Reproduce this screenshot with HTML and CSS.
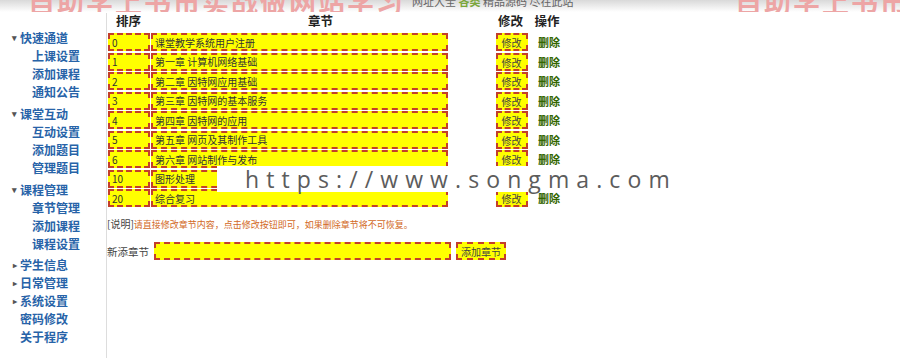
FILE: index.html
```html
<!DOCTYPE html>
<html>
<head>
  <title>章节管理</title>
  <link rel="stylesheet" href="styles.css">
</head>
<body>
<div class="topbar">
  <span class="brand brand-left">自助学上书市实战做网站学习</span>
  <span class="topnote">网址大全 <b>各类</b> 精品源码 尽在此站</span>
  <span class="brand brand-right">自助学上书市</span>
</div>

<div class="layout">
  <div class="side">
    <div class="group">
      <div class="group-title"><span class="arrow">&#9662;</span>快速通道</div>
      <a class="side-link">上课设置</a>
      <a class="side-link">添加课程</a>
      <a class="side-link">通知公告</a>
    </div>
    <div class="group">
      <div class="group-title"><span class="arrow">&#9662;</span>课堂互动</div>
      <a class="side-link">互动设置</a>
      <a class="side-link">添加题目</a>
      <a class="side-link">管理题目</a>
    </div>
    <div class="group">
      <div class="group-title"><span class="arrow">&#9662;</span>课程管理</div>
      <a class="side-link">章节管理</a>
      <a class="side-link">添加课程</a>
      <a class="side-link">课程设置</a>
    </div>
    <div class="group closed-first">
      <div class="group-title"><span class="arrow small">&#9656;</span>学生信息</div>
    </div>
    <div class="group closed">
      <div class="group-title"><span class="arrow small">&#9656;</span>日常管理</div>
    </div>
    <div class="group closed">
      <div class="group-title"><span class="arrow small">&#9656;</span>系统设置</div>
    </div>
    <a class="side-plain">密码修改</a>
    <a class="side-plain">关于程序</a>
  </div>

  <div class="main">
    <div class="grid thead">
      <div>排序</div>
      <div>章节</div>
      <div>修改</div>
      <div>操作</div>
    </div>

    <div class="rows" id="rows"></div>

    <p class="note">[说明]<span>请直接修改章节内容，点击修改按钮即可，如果删除章节将不可恢复。</span></p>

    <form class="add-row">
      <label for="newname">新添章节</label>
      <input type="text" id="newname" class="field wide">
      <button type="button" class="btn">添加章节</button>
    </form>
  </div>
</div>

<div class="watermark">https://www.songma.com</div>

<script>
  var chapters = [
    [0, "课堂教学系统用户注册"],
    [1, "第一章 计算机网络基础"],
    [2, "第二章 因特网应用基础"],
    [3, "第三章 因特网的基本服务"],
    [4, "第四章 因特网的应用"],
    [5, "第五章 网页及其制作工具"],
    [6, "第六章 网站制作与发布"],
    [10, "图形处理"],
    [20, "综合复习"]
  ];

  var rows = document.getElementById("rows");
  chapters.forEach(function (c) {
    var row = document.createElement("form");
    row.className = "grid row";
    row.innerHTML =
      '<div><input class="field num" value="' + c[0] + '"></div>' +
      '<div><input class="field wide" value="' + c[1] + '"></div>' +
      '<div class="center"><button type="button" class="btn">修改</button></div>' +
      '<div class="center"><a class="del">删除</a></div>';
    rows.appendChild(row);
  });
</script>
</body>
</html>
```

FILE: styles.css
```css
body {
  font-family: "Noto Sans CJK SC", "Liberation Sans", sans-serif;
  margin: 0;
  padding: 0;
  background: #fff;
  color: #333;
}

.topbar {
  position: relative;
  height: 12px;
  overflow: hidden;
  background: linear-gradient(#d9d9d9, #fff);
}
.brand {
  position: absolute;
  top: -18px;
  font-size: 27px;
  font-weight: bold;
  color: #eda5a5;
  white-space: nowrap;
  letter-spacing: 2px;
}
.brand-left {
  left: 28px;
}
.brand-right {
  left: 735px;
}
.topnote {
  position: absolute;
  left: 412px;
  top: -7px;
  font-size: 11px;
  color: #666;
  white-space: nowrap;
}
.topnote b {
  color: #7aa63a;
}

.layout {
  display: flex;
  align-items: stretch;
  min-height: 346px;
}

.side {
  width: 107px;
  flex: none;
  border-right: 1px solid #ddd;
  padding-top: 16px;
  margin-top: 1px;
  box-sizing: border-box;
  font-size: 12px;
  font-weight: bold;
  line-height: 18px;
  color: #2763a8;
}
.group {
  margin-bottom: 4px;
}
.group.closed-first {
  margin-bottom: 0;
  margin-top: -1px;
}
.group.closed {
  margin-bottom: 0;
}
.group-title {
  padding-left: 12px;
  display: flex;
  align-items: center;
}
.arrow {
  width: 8px;
  font-size: 9px;
  color: #555;
}
.arrow.small {
  font-size: 8px;
  padding-left: 1px;
  width: 7px;
}
.side-link {
  display: block;
  padding-left: 32px;
}
.side-plain {
  display: block;
  padding-left: 20px;
}

.main {
  flex: 1;
  font-size: 10px;
}

.grid {
  display: grid;
  grid-template-columns: 43px 341px 39px 34px;
}
.thead {
  font-size: 12.5px;
  font-weight: bold;
  color: #222;
  line-height: 18px;
  text-align: center;
  margin-bottom: 3px;
}

.rows {
  display: flex;
  flex-direction: column;
  gap: 1.5px;
  padding-left: 1px;
}
.row {
  margin: 0;
  height: 18px;
  align-items: center;
}
.center {
  text-align: center;
}

.field {
  box-sizing: border-box;
  height: 18px;
  margin: 0;
  padding: 0 2px;
  background: #ffff00;
  border: 2px dashed #c33f2a;
  font-family: "Noto Sans CJK SC", sans-serif;
  font-size: 10px;
  color: #333;
  outline: none;
}
.field.num {
  width: 42px;
}
.field.wide {
  width: 297px;
}
.btn {
  box-sizing: border-box;
  height: 18px;
  padding: 0 3px;
  margin: 0;
  background: #ffff00;
  border: 2px dashed #c33f2a;
  font-family: "Noto Sans CJK SC", sans-serif;
  font-size: 10px;
  color: #444;
}
.row .btn {
  width: 32px;
  padding: 0;
}
.del {
  font-size: 11px;
  color: #336600;
  font-weight: bold;
  position: relative;
  left: 1px;
}

.note {
  margin: 10px 0 0;
  line-height: 14px;
  font-size: 10px;
  color: #444;
}
.note span {
  font-size: 9px;
  color: #d2691e;
}

.add-row {
  display: flex;
  align-items: center;
  margin-top: 10px;
  gap: 4px;
}
.add-row label {
  font-size: 10.5px;
  color: #444;
  margin-right: 1px;
}
.add-row .btn {
  margin-left: 1px;
}

.watermark {
  position: absolute;
  left: 217px;
  top: 166px;
  height: 26px;
  padding: 0 12px 0 28px;
  background: #fff;
  font-family: "Open Sans", sans-serif;
  font-size: 23px;
  line-height: 26px;
  letter-spacing: 7.1px;
  color: #5c5c5c;
}
```
